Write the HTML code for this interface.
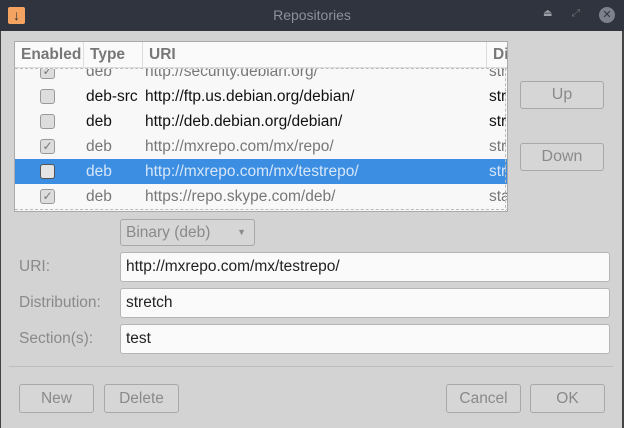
<html><head><style>
body{margin:0;width:624px;height:428px;background:#d3d3d3;font-family:"Liberation Sans","DejaVu Sans",sans-serif;font-size:15.5px;position:relative;overflow:hidden}
.a{position:absolute}
.tb{left:0;top:0;width:624px;height:31px;background:#2f343f}
.btn{position:absolute;border:1px solid #a8a8a8;border-radius:3px;background:#d6d6d6;color:#8a8a8a;text-align:center;box-sizing:border-box}
.fld{position:absolute;left:120px;width:490px;background:#fafafa;border:1px solid #b5b5b5;border-radius:3px;box-sizing:border-box;padding-left:5px;color:#222}
.lbl{position:absolute;left:19px;color:#8a8a8a}
.row{position:absolute;left:15px;width:492px;height:25px;line-height:25px}
.row span{position:absolute}
.cb{position:absolute;left:26px;top:5px;width:15px;height:15px;border:1px solid #999;border-radius:3px;background:#ddd;box-sizing:border-box;font-size:12px;line-height:13px;text-align:center;font-style:normal;color:#777}
</style></head><body>
<div class="a tb"></div>
<div class="a" style="left:8px;top:7px;width:17px;height:17px;background:#f4a460;border-radius:2px;color:#333;font-size:14px;line-height:17px;text-align:center;font-weight:bold">↓</div>
<div class="a" style="left:0;top:7px;width:624px;text-align:center;color:#8b919c;font-size:14px">Repositories</div>
<div class="a" style="left:543px;top:8px;color:#9ca0a8;font-size:10px">⏏</div>
<div class="a" style="left:572px;top:8px;color:#777;font-size:10px">⤢</div>
<div class="a" style="left:599px;top:7px;width:16px;height:16px;border-radius:50%;background:#7c818c;color:#2f343f;font-size:11px;line-height:16px;text-align:center;font-weight:bold">✕</div>
<div class="a" style="left:0;top:31px;width:1px;height:397px;background:#444"></div>
<div class="a" style="left:622px;top:31px;width:2px;height:397px;background:#444"></div>

<div class="a" style="left:14px;top:41px;width:494px;height:171px;background:#f8f8f8;border:1px solid #aaa;box-sizing:border-box;overflow:hidden">
 <div class="a" style="left:0;top:0;width:494px;height:25px;background:#fafafa;border-bottom:1px solid #ddd;color:#777;font-weight:bold;line-height:25px">
  <span class="a" style="left:6px">Enabled</span><span class="a" style="left:68px;top:0;height:25px;border-left:1px solid #ddd;padding-left:6px">Type</span>
  <span class="a" style="left:127px;top:0;height:25px;border-left:1px solid #ddd;padding-left:6px">URI</span>
  <span class="a" style="left:471px;top:0;height:25px;border-left:1px solid #ddd;padding-left:6px">Di</span>
 </div>
 <div class="a" style="left:0;top:26px;width:494px;height:142px;overflow:hidden;border-top:1px dashed #bbb;border-bottom:1px dashed #bbb;box-sizing:border-box">
  <div class="row" style="left:-1px;top:-10px;color:#777"><i class="cb">✓</i><span style="left:72px">deb</span><span style="left:131px">http://security.debian.org/</span><span style="left:475px">str</span></div>
  <div class="row" style="left:-1px;top:15px;color:#111"><i class="cb"></i><span style="left:72px">deb-src</span><span style="left:131px">http://ftp.us.debian.org/debian/</span><span style="left:475px">str</span></div>
  <div class="row" style="left:-1px;top:40px;color:#111"><i class="cb"></i><span style="left:72px">deb</span><span style="left:131px">http://deb.debian.org/debian/</span><span style="left:475px">str</span></div>
  <div class="row" style="left:-1px;top:65px;color:#777"><i class="cb">✓</i><span style="left:72px">deb</span><span style="left:131px">http://mxrepo.com/mx/repo/</span><span style="left:475px">str</span></div>
  <div class="row" style="left:-1px;top:90px;width:494px;background:#3b8ee2;color:#d6e6f8"><i class="cb" style="background:#e4e4e4;border-color:#555"></i><span style="left:72px">deb</span><span style="left:131px">http://mxrepo.com/mx/testrepo/</span><span style="left:475px">str</span></div>
  <div class="row" style="left:-1px;top:115px;color:#777"><i class="cb">✓</i><span style="left:72px">deb</span><span style="left:131px">https://repo.skype.com/deb/</span><span style="left:475px">sta</span></div>
 </div>
 <div class="a" style="left:490px;top:26px;width:0;height:145px;border-left:1px dashed #bbb"></div>
</div>

<div class="btn" style="left:520px;top:81px;width:84px;height:28px;line-height:26px;font-size:16px">Up</div>
<div class="btn" style="left:520px;top:143px;width:84px;height:28px;line-height:26px;font-size:16px">Down</div>

<div class="btn" style="left:120px;top:219px;width:135px;height:27px;line-height:25px;text-align:left;padding-left:5px">Binary (deb)<span style="position:absolute;right:8px;top:0;font-size:9px">▼</span></div>
<div class="lbl" style="top:258px">URI:</div>
<div class="fld" style="top:252px;height:30px;line-height:28px">http://mxrepo.com/mx/testrepo/</div>
<div class="lbl" style="top:294px">Distribution:</div>
<div class="fld" style="top:288px;height:30px;line-height:28px">stretch</div>
<div class="lbl" style="top:330px">Section(s):</div>
<div class="fld" style="top:324px;height:30px;line-height:28px">test</div>
<div class="a" style="left:9px;top:366px;width:604px;height:1px;background:#bdbdbd"></div>
<div class="btn" style="left:19px;top:384px;width:75px;height:29px;line-height:27px">New</div>
<div class="btn" style="left:104px;top:384px;width:75px;height:29px;line-height:27px">Delete</div>
<div class="btn" style="left:446px;top:384px;width:75px;height:29px;line-height:27px">Cancel</div>
<div class="btn" style="left:530px;top:384px;width:75px;height:29px;line-height:27px">OK</div>
</body></html>
